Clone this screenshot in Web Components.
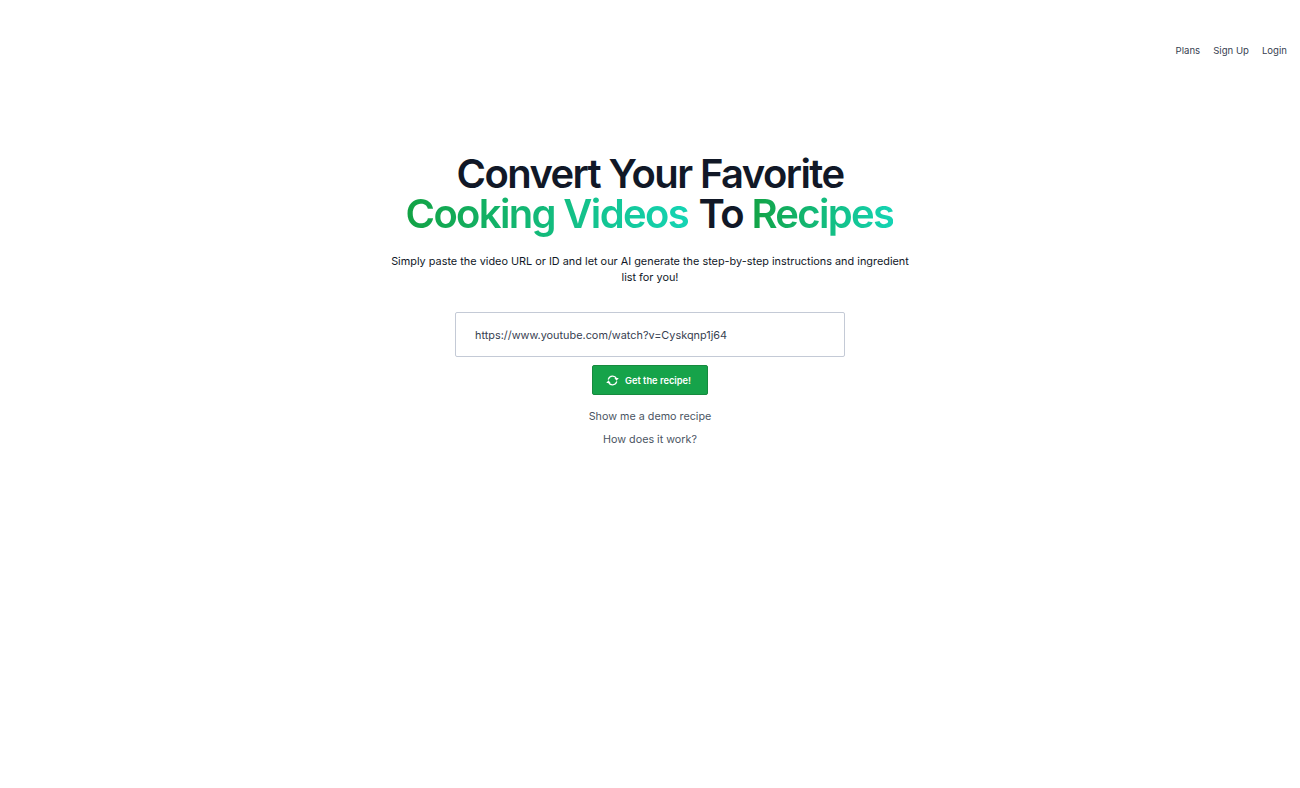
<!DOCTYPE html>
<html lang="en">
    <head>
        <meta charset="UTF-8" />
        <meta name="viewport" content="width=device-width, initial-scale=1.0" />
        <title>Video to Recipe</title>
        <style>
            html, body { margin: 0; padding: 0; background: #fff; }
            body { font-family: Inter, "Liberation Sans", sans-serif; }
        </style>
    </head>
    <body>
        <recipe-app>
            <top-nav slot="nav">
                <a href="#">Plans</a>
                <a href="#">Sign Up</a>
                <a href="#">Login</a>
            </top-nav>
            <hero-title>
                Convert Your Favorite<br>
                <em class="first">Cooking Videos</em> To <em class="last">Recipes</em>
            </hero-title>
            <hero-lead>Simply paste the video URL or ID and let our AI generate the step-by-step instructions and ingredient list for you!</hero-lead>
            <url-form value="https://www.youtube.com/watch?v=Cyskqnp1j64">Get the recipe!</url-form>
            <text-link>Show me a demo recipe</text-link>
            <text-link>How does it work?</text-link>
        </recipe-app>

        <template id="app-template">
            <style>
                :host { display: block; min-height: 788px; box-sizing: border-box; }
                header { display: flex; justify-content: flex-end; padding: 44px 13px 0 0; height: 100px; box-sizing: border-box; }
                main { display: flex; flex-direction: column; align-items: center; padding-top: 54px; }
            </style>
            <header><slot name="nav"></slot></header>
            <main><slot></slot></main>
        </template>

        <template id="nav-template">
            <style>
                :host { display: flex; gap: 13px; font-size: 9.6px; line-height: 14px; }
                ::slotted(a) { color: #374151; text-decoration: none; }
            </style>
            <slot></slot>
        </template>

        <template id="title-template">
            <style>
                :host { display: block; font-size: 40px; font-weight: 600; line-height: 40px; letter-spacing: -1.6px; color: #111827; text-align: center; }
                ::slotted(em) {
                    font-style: normal;
                    letter-spacing: -1.65px;
                    background: linear-gradient(to right, #12a244, #14d4b4);
                    -webkit-background-clip: text;
                    background-clip: text;
                    color: transparent;
                }
                ::slotted(em.first) { margin-right: 2px; }
                ::slotted(em.last) { margin-right: 1px; }
            </style>
            <slot></slot>
        </template>

        <template id="lead-template">
            <style>
                :host { display: block; width: 530px; margin-top: 19px; font-size: 10.88px; line-height: 16px; color: #111827; text-align: center; }
            </style>
            <slot></slot>
        </template>

        <template id="form-template">
            <style>
                :host { display: flex; flex-direction: column; align-items: center; margin-top: 27px; margin-bottom: 10px; }
                input {
                    box-sizing: border-box; width: 390px; height: 45px; padding: 0 19px;
                    border: 1px solid #c4cad6; border-radius: 2px; outline: 0; background: #fff;
                    font: 10.88px Inter, "Liberation Sans", sans-serif; color: #374151;
                }
                button {
                    display: flex; align-items: center; gap: 6px; box-sizing: border-box;
                    width: 116px; height: 30px; margin-top: 8px; padding: 0 0 0 13px;
                    border: 1px solid #168a3e; border-radius: 2px; background: #16a34a; color: #fff;
                    font: 600 9.3px Inter, "Liberation Sans", sans-serif;
                }
                svg { width: 13px; height: 13px; flex: none; }
            </style>
            <input type="text">
            <button type="button">
                <svg viewBox="0 0 24 24" fill="none" stroke="currentColor" stroke-width="2.4" stroke-linecap="round">
                    <path d="M4.4 9.5A8.2 8.2 0 0 1 19.4 8.5"/>
                    <path d="M19.6 14.5A8.2 8.2 0 0 1 4.6 15.5"/>
                    <path d="M23.5 7.5H15.5L19.5 12.5Z" fill="currentColor" stroke="none"/>
                    <path d="M.5 16.5H8.5L4.5 11.5Z" fill="currentColor" stroke="none"/>
                </svg>
                <slot></slot>
            </button>
        </template>

        <template id="link-template">
            <style>
                :host { display: block; font-size: 10.75px; line-height: 23px; color: #4b5563; text-align: center; }
            </style>
            <slot></slot>
        </template>

        <script>
            // every element just clones its template into an open shadow root
            class TemplateElement extends HTMLElement {
                connectedCallback() {
                    if (this.shadowRoot) return;
                    this.attachShadow({ mode: "open" });
                    const id = this.constructor.templateId;
                    this.shadowRoot.append(document.getElementById(id).content.cloneNode(true));
                }
            }

            class RecipeApp extends TemplateElement { static templateId = "app-template"; }
            class TopNav extends TemplateElement { static templateId = "nav-template"; }
            class HeroTitle extends TemplateElement { static templateId = "title-template"; }
            class HeroLead extends TemplateElement { static templateId = "lead-template"; }
            class TextLink extends TemplateElement { static templateId = "link-template"; }

            class UrlForm extends TemplateElement {
                static templateId = "form-template";
                connectedCallback() {
                    super.connectedCallback();
                    const input = this.shadowRoot.querySelector("input");
                    input.value = this.getAttribute("value");
                    input.setAttribute("value", this.getAttribute("value"));
                }
            }

            customElements.define("recipe-app", RecipeApp);
            customElements.define("top-nav", TopNav);
            customElements.define("hero-title", HeroTitle);
            customElements.define("hero-lead", HeroLead);
            customElements.define("text-link", TextLink);
            customElements.define("url-form", UrlForm);
        </script>
    </body>
</html>
